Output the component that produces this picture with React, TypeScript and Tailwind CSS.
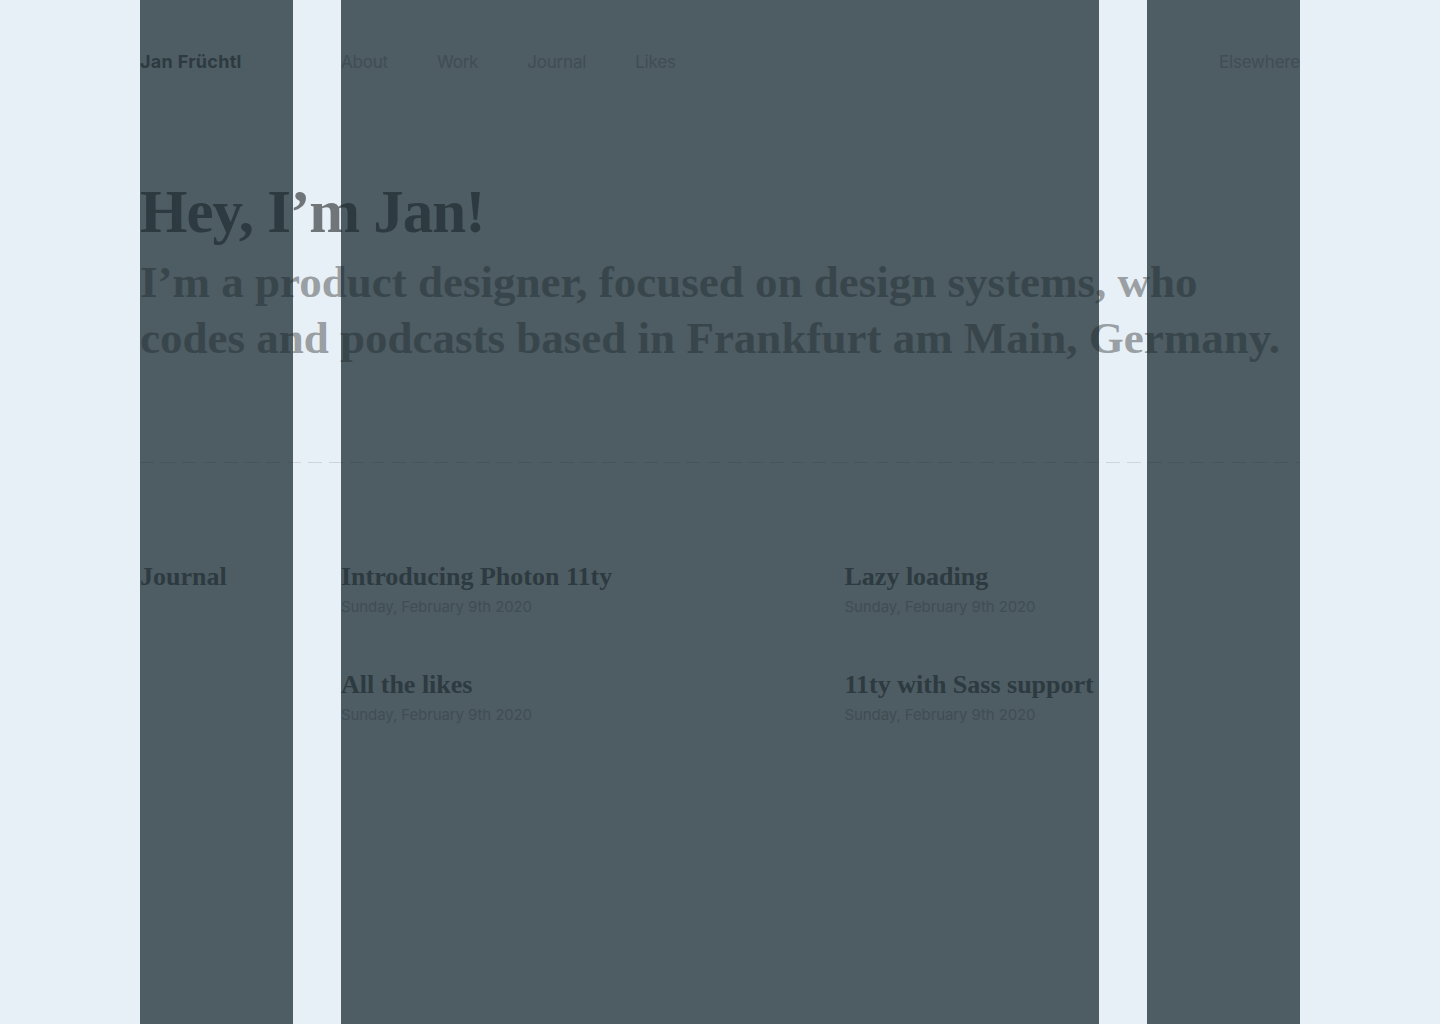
import React from 'react'

const posts = [
  { title: 'Introducing Photon 11ty', date: 'Sunday, February 9th 2020' },
  { title: 'Lazy loading', date: 'Sunday, February 9th 2020' },
  { title: 'All the likes', date: 'Sunday, February 9th 2020' },
  { title: '11ty with Sass support', date: 'Sunday, February 9th 2020' }
]

const navLinks = ['About', 'Work', 'Journal', 'Likes']

const serif = "font-['Liberation_Serif','DejaVu_Serif',serif]"

export default function App() {
  return (
    <div className="relative min-h-screen bg-[#e8f0f7] font-['Inter','Noto_Sans',sans-serif] overflow-hidden">
      <div className="mx-auto w-[1160px]">
        {/* Header */}
        <header className="grid grid-cols-[153px_1fr_153px] gap-12 pt-[50px]">
          <a className="text-[18px] font-bold leading-6 text-[#6f7578] tracking-[0.3px]">Jan Früchtl</a>
          <nav className="flex gap-[49px] text-[17px] leading-6 text-[#b5b9bf] tracking-[-0.2px]">
            {navLinks.map((link) => (
              <a key={link}>{link}</a>
            ))}
          </nav>
          <a className="text-right text-[17px] leading-6 text-[#b5b9bf] tracking-[-0.2px]">Elsewhere</a>
        </header>

        {/* Intro */}
        <section className={`${serif} pt-[106px] pb-[96px]`}>
          <h1 className="text-[61px] font-bold leading-[64px] text-[#6f7578] tracking-[-1px]">Hey, I’m Jan!</h1>
          <p className="mt-[10px] text-[45px] font-bold leading-[56px] text-[#999fa3]">
            I’m a product designer, focused on design systems, who codes and podcasts based in Frankfurt am Main, Germany.
          </p>
        </section>

        <div className="h-px bg-[repeating-linear-gradient(to_right,#cdd4db_0_14px,transparent_14px_21px)]" />

        {/* Journal */}
        <section className="grid grid-cols-[153px_1fr] gap-12 pt-[98px]">
          <h2 className={`${serif} text-[26px] font-bold leading-8 text-[#6f7578]`}>Journal</h2>
          <div className="grid grid-cols-2 gap-x-12 gap-y-[50px]">
            {posts.map((post) => (
              <article key={post.title}>
                <h3 className={`${serif} text-[26px] font-bold leading-8 text-[#6f7578]`}>{post.title}</h3>
                <p className="mt-[2px] text-[15px] leading-6 text-[#b5b9bf] tracking-[-0.1px]">{post.date}</p>
              </article>
            ))}
          </div>
        </section>
      </div>

      {/* Grid overlay */}
      <div className="pointer-events-none absolute inset-0">
        <div className="mx-auto grid h-full w-[1160px] grid-cols-[153px_1fr_153px] gap-12">
          <div className="bg-[rgba(21,37,44,0.73)]" />
          <div className="bg-[rgba(21,37,44,0.73)]" />
          <div className="bg-[rgba(21,37,44,0.73)]" />
        </div>
      </div>
    </div>
  )
}
